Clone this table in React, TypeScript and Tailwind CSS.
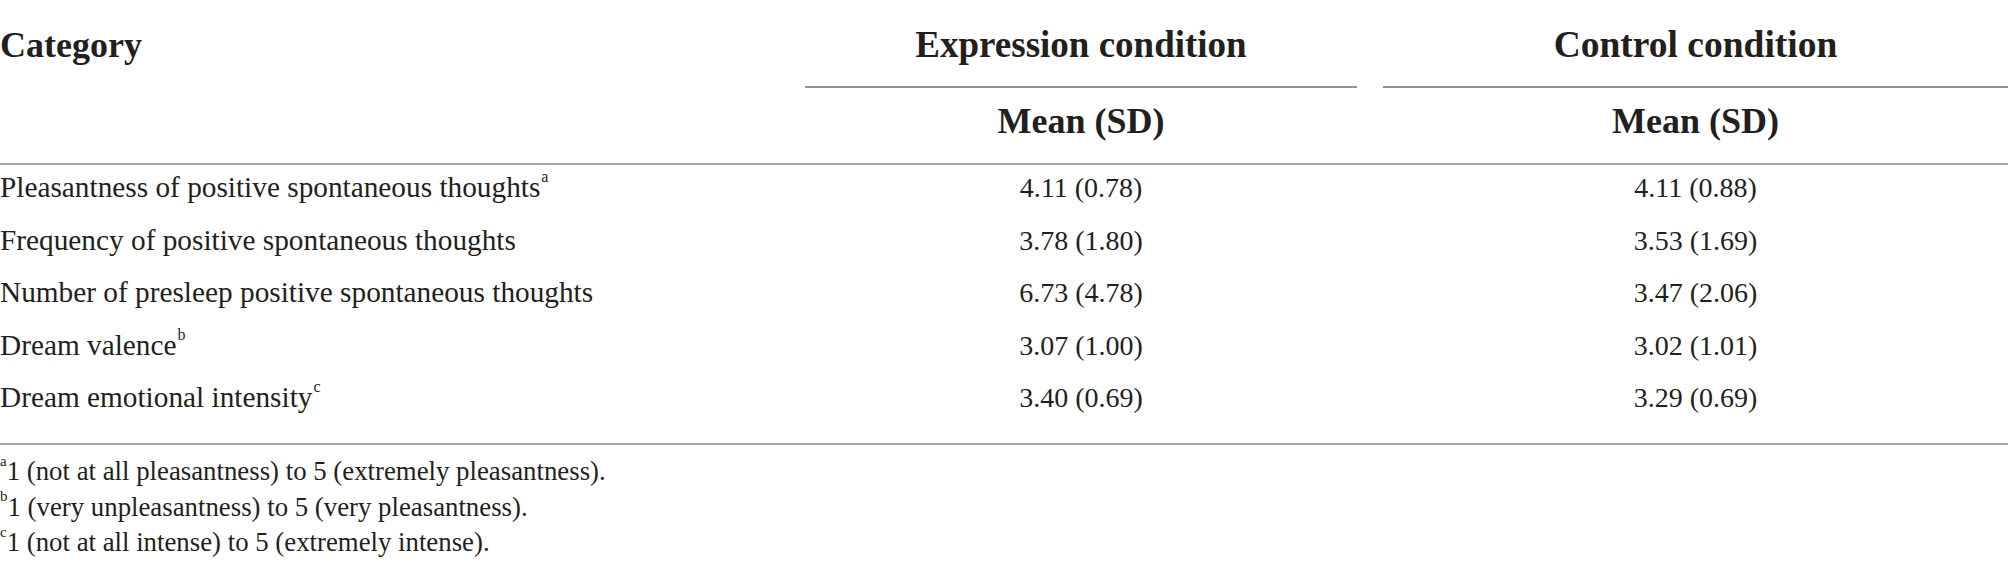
import React from "react";

const rows: { label: string; sup?: string; e: string; c: string }[] = [
  { label: "Pleasantness of positive spontaneous thoughts", sup: "a", e: "4.11 (0.78)", c: "4.11 (0.88)" },
  { label: "Frequency of positive spontaneous thoughts", e: "3.78 (1.80)", c: "3.53 (1.69)" },
  { label: "Number of presleep positive spontaneous thoughts", e: "6.73 (4.78)", c: "3.47 (2.06)" },
  { label: "Dream valence", sup: "b", e: "3.07 (1.00)", c: "3.02 (1.01)" },
  { label: "Dream emotional intensity", sup: "c", e: "3.40 (0.69)", c: "3.29 (0.69)" },
];

const notes: { sup: string; text: string }[] = [
  { sup: "a", text: "1 (not at all pleasantness) to 5 (extremely pleasantness)." },
  { sup: "b", text: "1 (very unpleasantness) to 5 (very pleasantness)." },
  { sup: "c", text: "1 (not at all intense) to 5 (extremely intense)." },
];

export default function App() {
  return (
    <div
      className="w-[2008px] h-[574px] overflow-hidden bg-white text-[#231f20]"
      style={{ fontFamily: '"Liberation Serif", "Times New Roman", serif' }}
    >
      {/* header */}
      <div className="grid grid-cols-[792px_578px_1fr] border-b-2 border-[#a6a6a6]">
        <div className="row-span-2 pt-[25px] text-[36px] leading-[40px] font-bold">Category</div>
        <div className="px-[13px]">
          <div className="pt-[25px] pb-[21px] text-center text-[37px] leading-[40px] font-bold border-b-2 border-[#939393]">
            Expression condition
          </div>
        </div>
        <div className="pl-[13px]">
          <div className="pt-[25px] pb-[21px] text-center text-[37.5px] leading-[40px] font-bold border-b-2 border-[#939393]">
            Control condition
          </div>
        </div>
        <div className="px-[13px] pt-[13px] pb-[22px] text-center text-[36px] leading-[40px] font-bold">Mean (SD)</div>
        <div className="pl-[13px] pt-[13px] pb-[22px] text-center text-[36px] leading-[40px] font-bold">Mean (SD)</div>
      </div>

      {/* body */}
      <div className="pb-[15.5px] border-b-2 border-[#a6a6a6]">
        {rows.map((r) => (
          <div key={r.label} className="grid grid-cols-[792px_578px_1fr] leading-[45px] pb-[7.5px]">
            <div className="whitespace-nowrap text-[29.3px]">
              {r.label}
              {r.sup && <sup className="text-[16px] leading-none align-[7px] ml-[1px]">{r.sup}</sup>}
            </div>
            <div className="px-[13px] text-center text-[28px]">{r.e}</div>
            <div className="pl-[13px] text-center text-[28px]">{r.c}</div>
          </div>
        ))}
      </div>

      {/* footnotes */}
      <div className="pt-[9px] text-[26.8px] leading-[35.5px]">
        {notes.map((n) => (
          <div key={n.sup} className="whitespace-nowrap">
            <sup className="text-[15px] leading-none align-[7px]">{n.sup}</sup>
            {n.text}
          </div>
        ))}
      </div>
    </div>
  );
}
